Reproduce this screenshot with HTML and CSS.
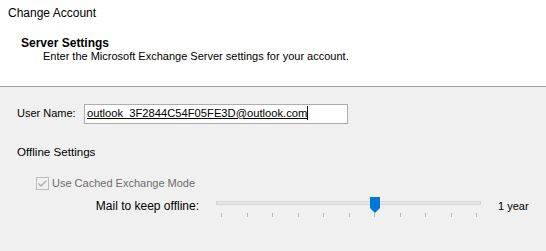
FILE: index.html
```html
<!DOCTYPE html>
<html>
<head>
    <title>Change Account</title>
    <link rel="stylesheet" href="styles.css">
</head>
<body>
    <div class="banner">
        <div class="dialog-title">Change Account</div>
        <div class="page-title">Server Settings</div>
        <div class="page-desc">Enter the Microsoft Exchange Server settings for your account.</div>
    </div>

    <div class="content">
        <div class="field-row">
            <label class="field-label" for="userName">User Name:</label>
            <div class="textbox" id="userName">
                <span class="textbox-value">outlook_3F2844C54F05FE3D@outlook.com</span><span class="caret"></span>
            </div>
        </div>

        <div class="group-title">Offline Settings</div>

        <div class="check-row disabled">
            <span class="checkbox">
                <svg width="11" height="11" viewBox="0 0 11 11">
                    <path d="M1.5 5.5 L4 8 L9.5 2.5" fill="none" stroke="#a8a8a8" stroke-width="1.3"/>
                </svg>
            </span>
            <span>Use Cached Exchange Mode</span>
        </div>

        <div class="slider-row">
            <span class="slider-label">Mail to keep offline:</span>
            <div class="slider">
                <div class="slider-track"></div>
                <div class="slider-ticks">
                    <span></span><span></span><span></span><span></span><span></span><span></span>
                    <span></span><span></span><span></span><span></span><span></span>
                </div>
                <!-- thumb sits on tick 7 of 11 -->
                <svg class="slider-thumb" width="10" height="16" viewBox="0 0 10 16">
                    <path d="M0 0 H10 V11 L5 16 L0 11 Z" fill="#0078d7"/>
                </svg>
            </div>
            <span class="slider-value">1 year</span>
        </div>
    </div>
</body>
</html>
```

FILE: styles.css
```css
body {
    margin: 0;
    background-color: #f0f0f0;
    font-family: "Liberation Sans", Arial, sans-serif;
    font-size: 11px;
    line-height: 16px;
    color: #000;
}
.banner {
    background-color: #fff;
    padding: 5px 0 25px 8px;
    border-bottom: 1px solid #a0a0a0;
}
.dialog-title {
    font-size: 12px;
}
.page-title {
    margin: 17px 0 0 13px;
    font-size: 12px;
    font-weight: bold;
    line-height: 10px;
}
.page-desc {
    margin: 3px 0 0 35px;
    line-height: 10px;
}
.content {
    padding: 17px 0 0 17px;
}
.field-row {
    display: flex;
    align-items: baseline;
}
.field-label {
    width: 67px;
}
.textbox {
    box-sizing: border-box;
    width: 264px;
    height: 20px;
    padding: 0 2px 2px 2px;
    background-color: #fff;
    border: 1px solid #adadad;
    display: flex;
    align-items: center;
}
.textbox-value {
    font-size: 11.2px;
    text-decoration: underline;
}
.caret {
    display: inline-block;
    width: 1px;
    height: 14px;
    background-color: #000;
}
.group-title {
    margin-top: 20px;
    font-size: 11.6px;
}
.check-row {
    display: flex;
    align-items: center;
    gap: 3px;
    margin: 15px 0 0 19px;
}
.disabled {
    color: #6d6d6d;
}
.checkbox {
    box-sizing: border-box;
    width: 13px;
    height: 13px;
    border: 1px solid #bcbcbc;
    display: flex;
    align-items: center;
    justify-content: center;
}
.slider-row {
    display: flex;
    align-items: flex-start;
    gap: 17px;
    margin-top: 7px;
}
.slider-label {
    width: 182px;
    font-size: 12px;
    text-align: right;
}
.slider {
    position: relative;
    width: 265px;
    padding-top: 3px;
}
.slider-track {
    height: 2px;
    background-color: #e7e7e7;
    border: 1px solid #d6d6d6;
}
.slider-ticks {
    display: flex;
    justify-content: space-between;
    margin: 8px 4px 0 5px;
}
.slider-ticks span {
    width: 1px;
    height: 4px;
    background-color: #b4b4b4;
}
.slider-thumb {
    position: absolute;
    left: 154px;
    top: -1px;
}
```
